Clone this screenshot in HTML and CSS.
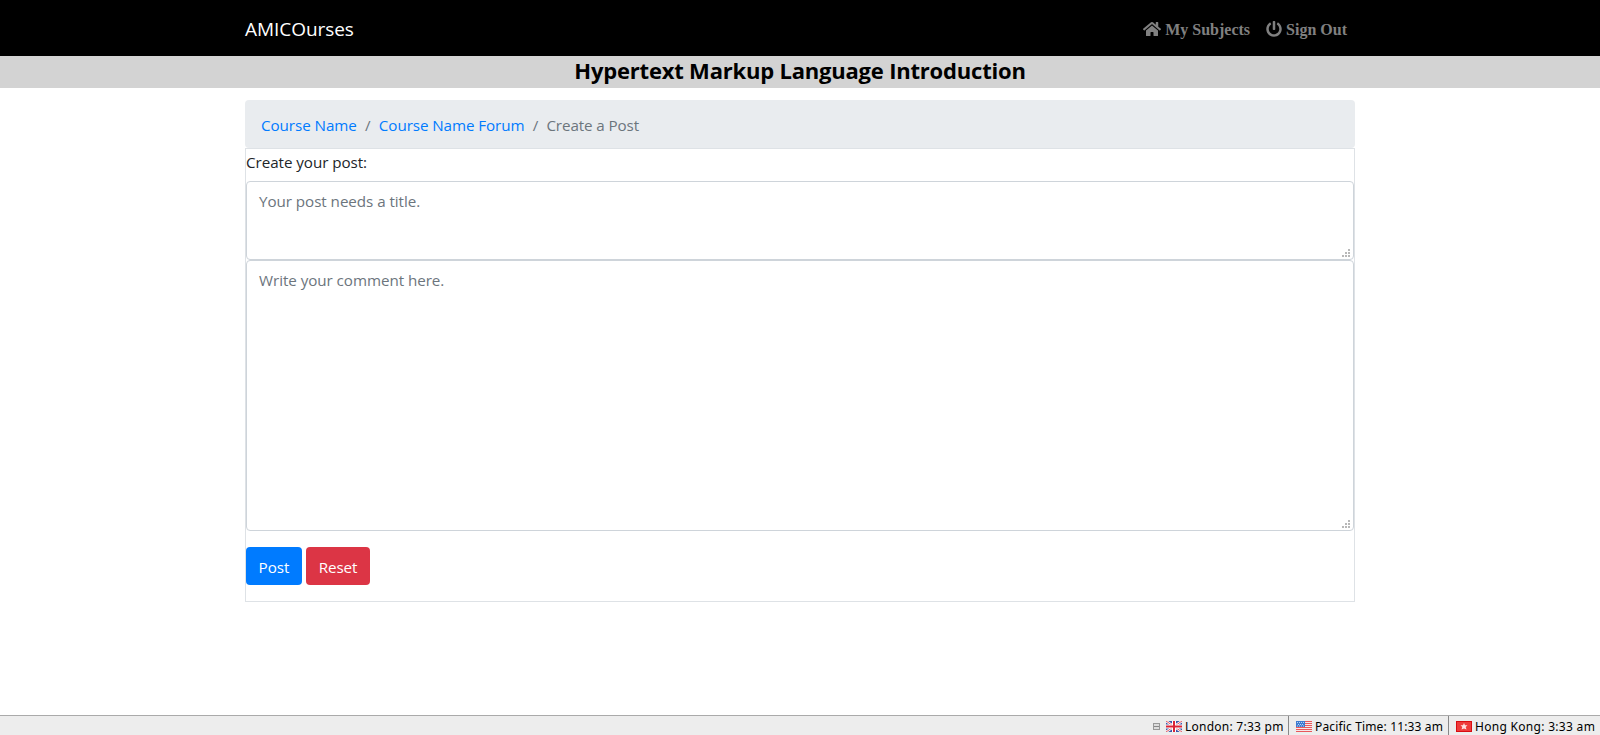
FILE: index.html
```html
<!DOCTYPE html>
<html lang="en">
<head>
<meta charset="utf-8">
<title>Create a Post</title>
<link rel="stylesheet" href="styles.css">
</head>
<body>
<nav class="navbar">
  <div class="container navbar-inner">
    <a class="brand" href="#">AMICOurses</a>
    <div class="nav-links">
      <a class="nav-link" href="#"><svg class="icon-home" viewBox="0 0 576 512"><path d="M280.37 148.26L96 300.11V464a16 16 0 0 0 16 16l112.06-.29a16 16 0 0 0 15.92-16V368a16 16 0 0 1 16-16h64a16 16 0 0 1 16 16v95.64a16 16 0 0 0 16 16.05L464 480a16 16 0 0 0 16-16V300L295.67 148.26a12.19 12.19 0 0 0-15.3 0zM571.6 251.47L488 182.56V44.05a12 12 0 0 0-12-12h-56a12 12 0 0 0-12 12v72.61L318.47 43a48 48 0 0 0-61 0L4.34 251.47a12 12 0 0 0-1.6 16.9l25.5 31A12 12 0 0 0 45.15 301l235.22-193.74a12.19 12.19 0 0 1 15.3 0L530.9 301a12 12 0 0 0 16.9-1.6l25.5-31a12 12 0 0 0-1.7-16.93z"/></svg><span>My Subjects</span></a>
      <a class="nav-link" href="#"><svg class="icon-power" viewBox="0 0 512 512"><path d="M400 54.1c63 45 104 118.6 104 201.9 0 136.8-110.8 247.7-247.5 248C120 504.3 8.2 393 8 256.4 7.9 173.1 48.9 99.3 111.8 54.2c11.7-8.3 28-4.8 35 7.7L162.600 90.100c5.900 10.500 3.100 23.800-6.600 31-41.500 30.800-68 79.600-68 134.900-.1 92.300 74.500 168.100 168 168.100 91.600 0 168.600-74.200 168-169.100-.3-51.800-24.700-101.800-68.100-134-9.700-7.200-12.400-20.500-6.500-30.900l15.800-28.100c7-12.400 23.200-16.100 34.800-7.900zM296 264V24c0-13.300-10.700-24-24-24h-32c-13.300 0-24 10.700-24 24v240c0 13.300 10.700 24 24 24h32c13.300 0 24-10.700 24-24z"/></svg><span>Sign Out</span></a>
    </div>
  </div>
</nav>
<header class="course-title"><h1>Hypertext Markup Language Introduction</h1></header>
<main class="container">
  <ol class="breadcrumb">
    <li><a class="crumb-course" href="#">Course Name</a></li>
    <li class="slash">/</li>
    <li><a class="crumb-forum" href="#">Course Name Forum</a></li>
    <li class="slash">/</li>
    <li class="crumb-active">Create a Post</li>
  </ol>
  <form class="post-form">
    <label for="title">Create your post:</label>
    <div class="field">
      <textarea id="title" class="title-input" placeholder="Your post needs a title."></textarea>
      <svg class="grip" viewBox="0 0 8 8"><path d="M6 0h2v2H6zM3 3h2v2H3zM6 3h2v2H6zM0 6h2v2H0zM3 6h2v2H3zM6 6h2v2H6z"/></svg>
    </div>
    <div class="field">
      <textarea class="comment-input" placeholder="Write your comment here."></textarea>
      <svg class="grip" viewBox="0 0 8 8"><path d="M6 0h2v2H6zM3 3h2v2H3zM6 3h2v2H6zM0 6h2v2H0zM3 6h2v2H3zM6 6h2v2H6z"/></svg>
    </div>
    <div class="actions">
      <button class="btn btn-post" type="button">Post</button>
      <button class="btn btn-reset" type="reset">Reset</button>
    </div>
  </form>
</main>
<footer class="statusbar">
  <span class="collapse"></span>
  <div class="clock clock-london">
    <svg class="flag" viewBox="0 0 16 11"><path fill="#3b57a8" d="M0 0h16v11H0z"/><path stroke="#fff" stroke-width="2.400" d="M0 0l16 11M16 0L0 11"/><path stroke="#e0424d" stroke-width=".9" d="M0 0l16 11M16 0L0 11"/><path fill="#fff" d="M6 0h4v11H6zM0 3.500h16v4H0z"/><path fill="#dc2436" d="M7 0h2v11H7zM0 4.500h16v2H0z"/></svg>
    <span>London: 7:33 pm</span>
  </div>
  <div class="clock clock-pacific">
    <svg class="flag" viewBox="0 0 16 11"><path fill="#f5e8e8" d="M0 0h16v11H0z"/><path fill="#e9585c" d="M0 0h16v1H0zM0 2h16v1H0zM0 4h16v1H0zM0 6h16v1H0zM0 8h16v1H0zM0 10h16v1H0z"/><path fill="#3d7bd0" d="M0 0h9v6H0z"/><path fill="#b9d4f4" d="M1 1h1v1H1zM3 1h1v1H3zM5 1h1v1H5zM7 1h1v1H7zM2 3h1v1H2zM4 3h1v1H4zM6 3h1v1H6zM1 4.500h1v1H1zM3 4.500h1v1H3zM5 4.500h1v1H5zM7 4.500h1v1H7z"/></svg>
    <span>Pacific Time: 11:33 am</span>
  </div>
  <div class="clock clock-hk">
    <svg class="flag" viewBox="0 0 16 11"><path fill="#d80d12" d="M0 0h16v11H0z"/><path fill="#ee3b3b" d="M1 1h14v9H1z"/><path fill="#fff" fill-opacity=".85" d="M8 2l1 2.300 2.500-.1-1.800 1.900.8 2.500L8 7.400 5.500 8.600l.8-2.500-1.800-1.900 2.500.1z"/></svg>
    <span>Hong Kong: 3:33 am</span>
  </div>
</footer>
</body>
</html>
```
FILE: styles.css
```css
* { box-sizing: border-box; }
body {
  margin: 0;
  height: 735px;
  display: flex;
  flex-direction: column;
  overflow: hidden;
  background: #fff;
  color: #212529;
  font: 15.2px/24px "Open Sans", "Noto Sans", sans-serif;
  letter-spacing: -.05px;
}
a { text-decoration: none; }
.container { width: 1110px; margin: 0 auto; }
.navbar { height: 56px; background: #000; }
.navbar-inner { height: 56px; display: flex; justify-content: space-between; align-items: center; }
.brand { color: #fff; font-size: 19px; line-height: 30px; letter-spacing: -.05px; padding-top: 2px; }
.nav-links { display: flex; gap: 16px; padding: 3px 8px 0 0; }
.nav-link { display: flex; align-items: center; gap: 4px; color: #808080; font: bold 16px/24px "Liberation Serif", serif; letter-spacing: 0; }
.nav-link svg { fill: #808080; height: 16px; position: relative; top: -1px; }
.icon-home { width: 18px; }
.icon-power { width: 16px; }
.course-title { height: 32px; background: #d3d3d3; text-align: center; }
h1 { margin: 0; color: #000; font-size: 22px; line-height: 29px; font-weight: 700; letter-spacing: -.2px; }
.breadcrumb { list-style: none; display: flex; height: 48px; margin: 12px 0 0; padding: 13px 16px 0; background: #e9ecef; border-radius: 4px; }
.breadcrumb a { color: #007bff; }
.breadcrumb .slash { width: 22px; text-align: center; color: #6c757d; }
.crumb-forum { letter-spacing: -.08px; }
.crumb-active { color: #6c757d; letter-spacing: -.1px; }
.post-form { height: 454px; border: 1px solid #dee2e6; }
label { display: block; height: 32px; line-height: 27px; }
.field { position: relative; display: flex; }
textarea { width: 100%; margin: 0; padding: 7px 12px; border: 1px solid #ced4da; border-radius: 4px; resize: none; outline: 0; overflow: hidden; font: inherit; letter-spacing: inherit; line-height: 25px; background: #fff; }
textarea::placeholder { color: #6c757d; opacity: 1; }
.title-input { height: 79px; }
.comment-input { height: 271px; }
.grip { position: absolute; right: 4px; bottom: 3px; width: 8px; height: 8px; fill: #b8b8b8; }
.actions { display: flex; gap: 4px; margin-top: 16px; }
.btn { height: 38px; border: 0; padding: 2px 0 0; border-radius: 4px; color: #fff; font: inherit; text-align: center; }
.btn-post { width: 56px; background: #007bff; }
.btn-reset { width: 64px; background: #dc3545; letter-spacing: -.1px; }
.statusbar { height: 20px; margin-top: auto; display: flex; justify-content: flex-end; background: #ededed; border-top: 1px solid #aaa; color: #000; font: 12px/21px "Noto Sans", sans-serif; letter-spacing: .25px; }
.collapse { width: 7px; height: 7px; margin: 7px 6px 0 0; border: 1px solid #999; background: linear-gradient(#ddd 2px, #888 2px, #888 3px, #ddd 3px); }
.clock { display: flex; gap: 3px; white-space: nowrap; }
.flag { flex: none; width: 16px; height: 11px; margin-top: 5px; }
.clock-london { width: 122px; }
.clock-pacific { width: 160px; border-left: 1px solid #888; padding-left: 7px; letter-spacing: .15px; }
.clock-hk { width: 152px; border-left: 1px solid #888; padding-left: 7px; letter-spacing: .3px; }
```
